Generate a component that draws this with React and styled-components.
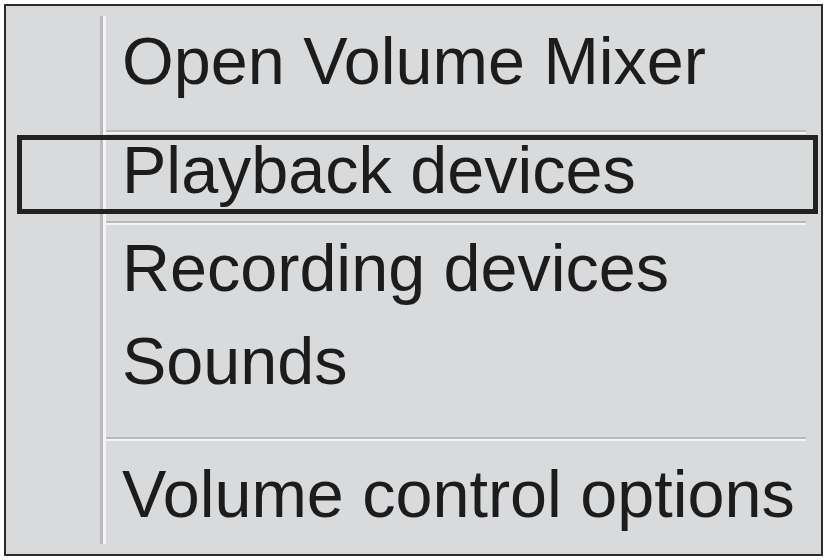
import React from 'react'
import styled, { createGlobalStyle } from 'styled-components'

const GlobalStyle = createGlobalStyle`
  html, body {
    margin: 0;
    padding: 0;
    background: #ffffff;
  }
`

const Frame = styled.div`
  box-sizing: border-box;
  margin: 4px 0 0 4px;
  width: 819px;
  height: 552px;
  border: 2px solid #2b2b2b;
  background: #d9dadc;
  padding: 10px 0;
  font-family: "Liberation Sans", Arial, sans-serif;
`

const List = styled.div`
  height: 100%;
  box-sizing: border-box;
  display: flex;
  flex-direction: column;
  background: linear-gradient(
    to right,
    transparent 94px,
    #b8b9bb 94px,
    #b8b9bb 97px,
    #f4f4f4 97px,
    #f4f4f4 100px,
    transparent 100px
  );
`

const Item = styled.div`
  font-size: 66.5px;
  line-height: ${p => (p.$focused ? '60px' : '66px')};
  color: #1c1c1c;
  white-space: nowrap;
  margin-top: ${p => p.$top}px;
  padding-left: ${p => (p.$focused ? '100px' : '116px')};
  ${p =>
    p.$focused &&
    `
    margin-left: 11px;
    margin-right: 3px;
    border: 5px solid #222222;
    padding-bottom: 9px;
  `}
`

const Separator = styled.div`
  margin: ${p => p.$top}px 15px 0 100px;
  height: 2px;
  background: #b8b9bb;
  border-bottom: 2px solid #f4f4f4;
`

const entries = [
  { label: 'Open Volume Mixer', top: 12 },
  { sep: true, top: 36 },
  { label: 'Playback devices', top: 1, focused: true },
  { sep: true, top: 7 },
  { label: 'Recording devices', top: 10 },
  { label: 'Sounds', top: 27 },
  { sep: true, top: 43 },
  { label: 'Volume control options', top: 20 },
]

export default function App() {
  return (
    <>
      <GlobalStyle />
      <Frame>
        <List>
          {entries.map((e, i) =>
            e.sep ? (
              <Separator key={i} $top={e.top} />
            ) : (
              <Item key={i} $top={e.top} $focused={e.focused}>
                {e.label}
              </Item>
            )
          )}
        </List>
      </Frame>
    </>
  )
}
